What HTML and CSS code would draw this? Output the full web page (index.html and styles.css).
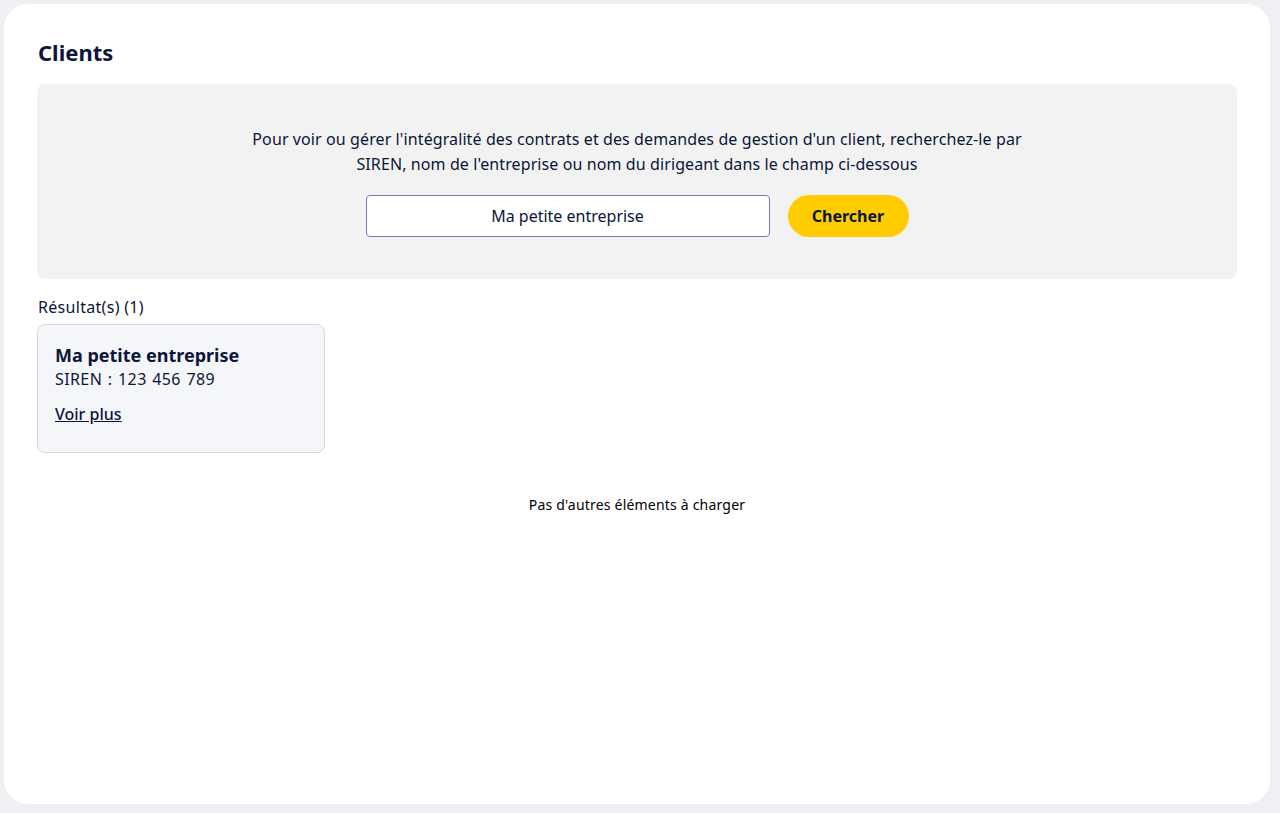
FILE: index.html
```html
<!DOCTYPE html>
<html lang="fr">
<head>
<meta charset="utf-8">
<title>Clients</title>
<link rel="stylesheet" href="styles.css">
</head>
<body>
<main class="panel">
  <h1 class="title">Clients</h1>
  <section class="search">
    <p class="search-text">Pour voir ou gérer l'intégralité des contrats et des demandes de gestion d'un client, recherchez-le par<br>SIREN, nom de l'entreprise ou nom du dirigeant dans le champ ci-dessous</p>
    <form class="search-form">
      <input class="search-input" type="text" value="Ma petite entreprise">
      <button class="search-btn" type="button">Chercher</button>
    </form>
  </section>
  <p class="results-count">Résultat(s) (1)</p>
  <div class="results">
    <article class="card">
      <h2 class="card-title">Ma petite entreprise</h2>
      <p class="card-siren">SIREN : 123 456 789</p>
      <a class="card-link" href="#">Voir plus</a>
    </article>
  </div>
  <p class="end-msg">Pas d'autres éléments à charger</p>
</main>
</body>
</html>
```
FILE: styles.css
```css
* { box-sizing: border-box; }
html, body { height: 100%; }
body {
  margin: 0;
  padding: 4px 10px 9px 4px;
  background: #eef0f4;
  font-family: "Noto Sans", "Open Sans", sans-serif;
  color: #0b1638;
}
.panel {
  background: #fff;
  border-radius: 24px;
  height: 100%;
  padding: 33px 33px 0 33px;
}
.title {
  margin: 0 0 17px 1px;
  font-size: 22px;
  line-height: 30px;
  font-weight: 700;
  color: #0b1638;
}
.search {
  background: #f2f2f2;
  border-radius: 8px;
  padding: 43px 20px 42px;
  display: flex;
  flex-direction: column;
  align-items: center;
}
.search-text {
  margin: 0;
  text-align: center;
  font-size: 16px;
  line-height: 25px;
  letter-spacing: 0.1px;
  color: #0b1638;
}
.search-form {
  display: flex;
  gap: 18px;
  margin-top: 18px;
}
.search-input {
  width: 404px;
  height: 42px;
  border: 1px solid #6f7db3;
  border-radius: 4px;
  background: #fff;
  font-family: inherit;
  font-size: 16px;
  color: #0b1638;
  text-align: center;
  padding: 0 12px;
}
.search-btn {
  width: 121px;
  height: 42px;
  border: none;
  border-radius: 21px;
  background: #ffcc00;
  font-family: inherit;
  font-size: 16px;
  font-weight: 700;
  color: #0b1638;
}
.results-count {
  margin: 18px 0 7px 1px;
  font-size: 16px;
  line-height: 20px;
  letter-spacing: 0.3px;
}
.results { display: flex; }
.card {
  width: 288px;
  height: 129px;
  background: #f5f6fa;
  border: 1px solid #d5d8de;
  border-radius: 8px;
  padding: 18px 17px;
}
.card-title {
  margin: 0;
  font-size: 18px;
  line-height: 24px;
  font-weight: 700;
}
.card-siren {
  margin: 0 0 11px;
  font-size: 16px;
  line-height: 24px;
  letter-spacing: 0.4px;
  word-spacing: 1px;
}
.card-link {
  font-size: 16px;
  line-height: 24px;
  font-weight: 500;
  color: #0b1638;
  text-decoration: underline;
}
.end-msg {
  margin: 42px 0 0;
  text-align: center;
  font-size: 14px;
  line-height: 20px;
  letter-spacing: 0.2px;
  color: #000;
}
```
